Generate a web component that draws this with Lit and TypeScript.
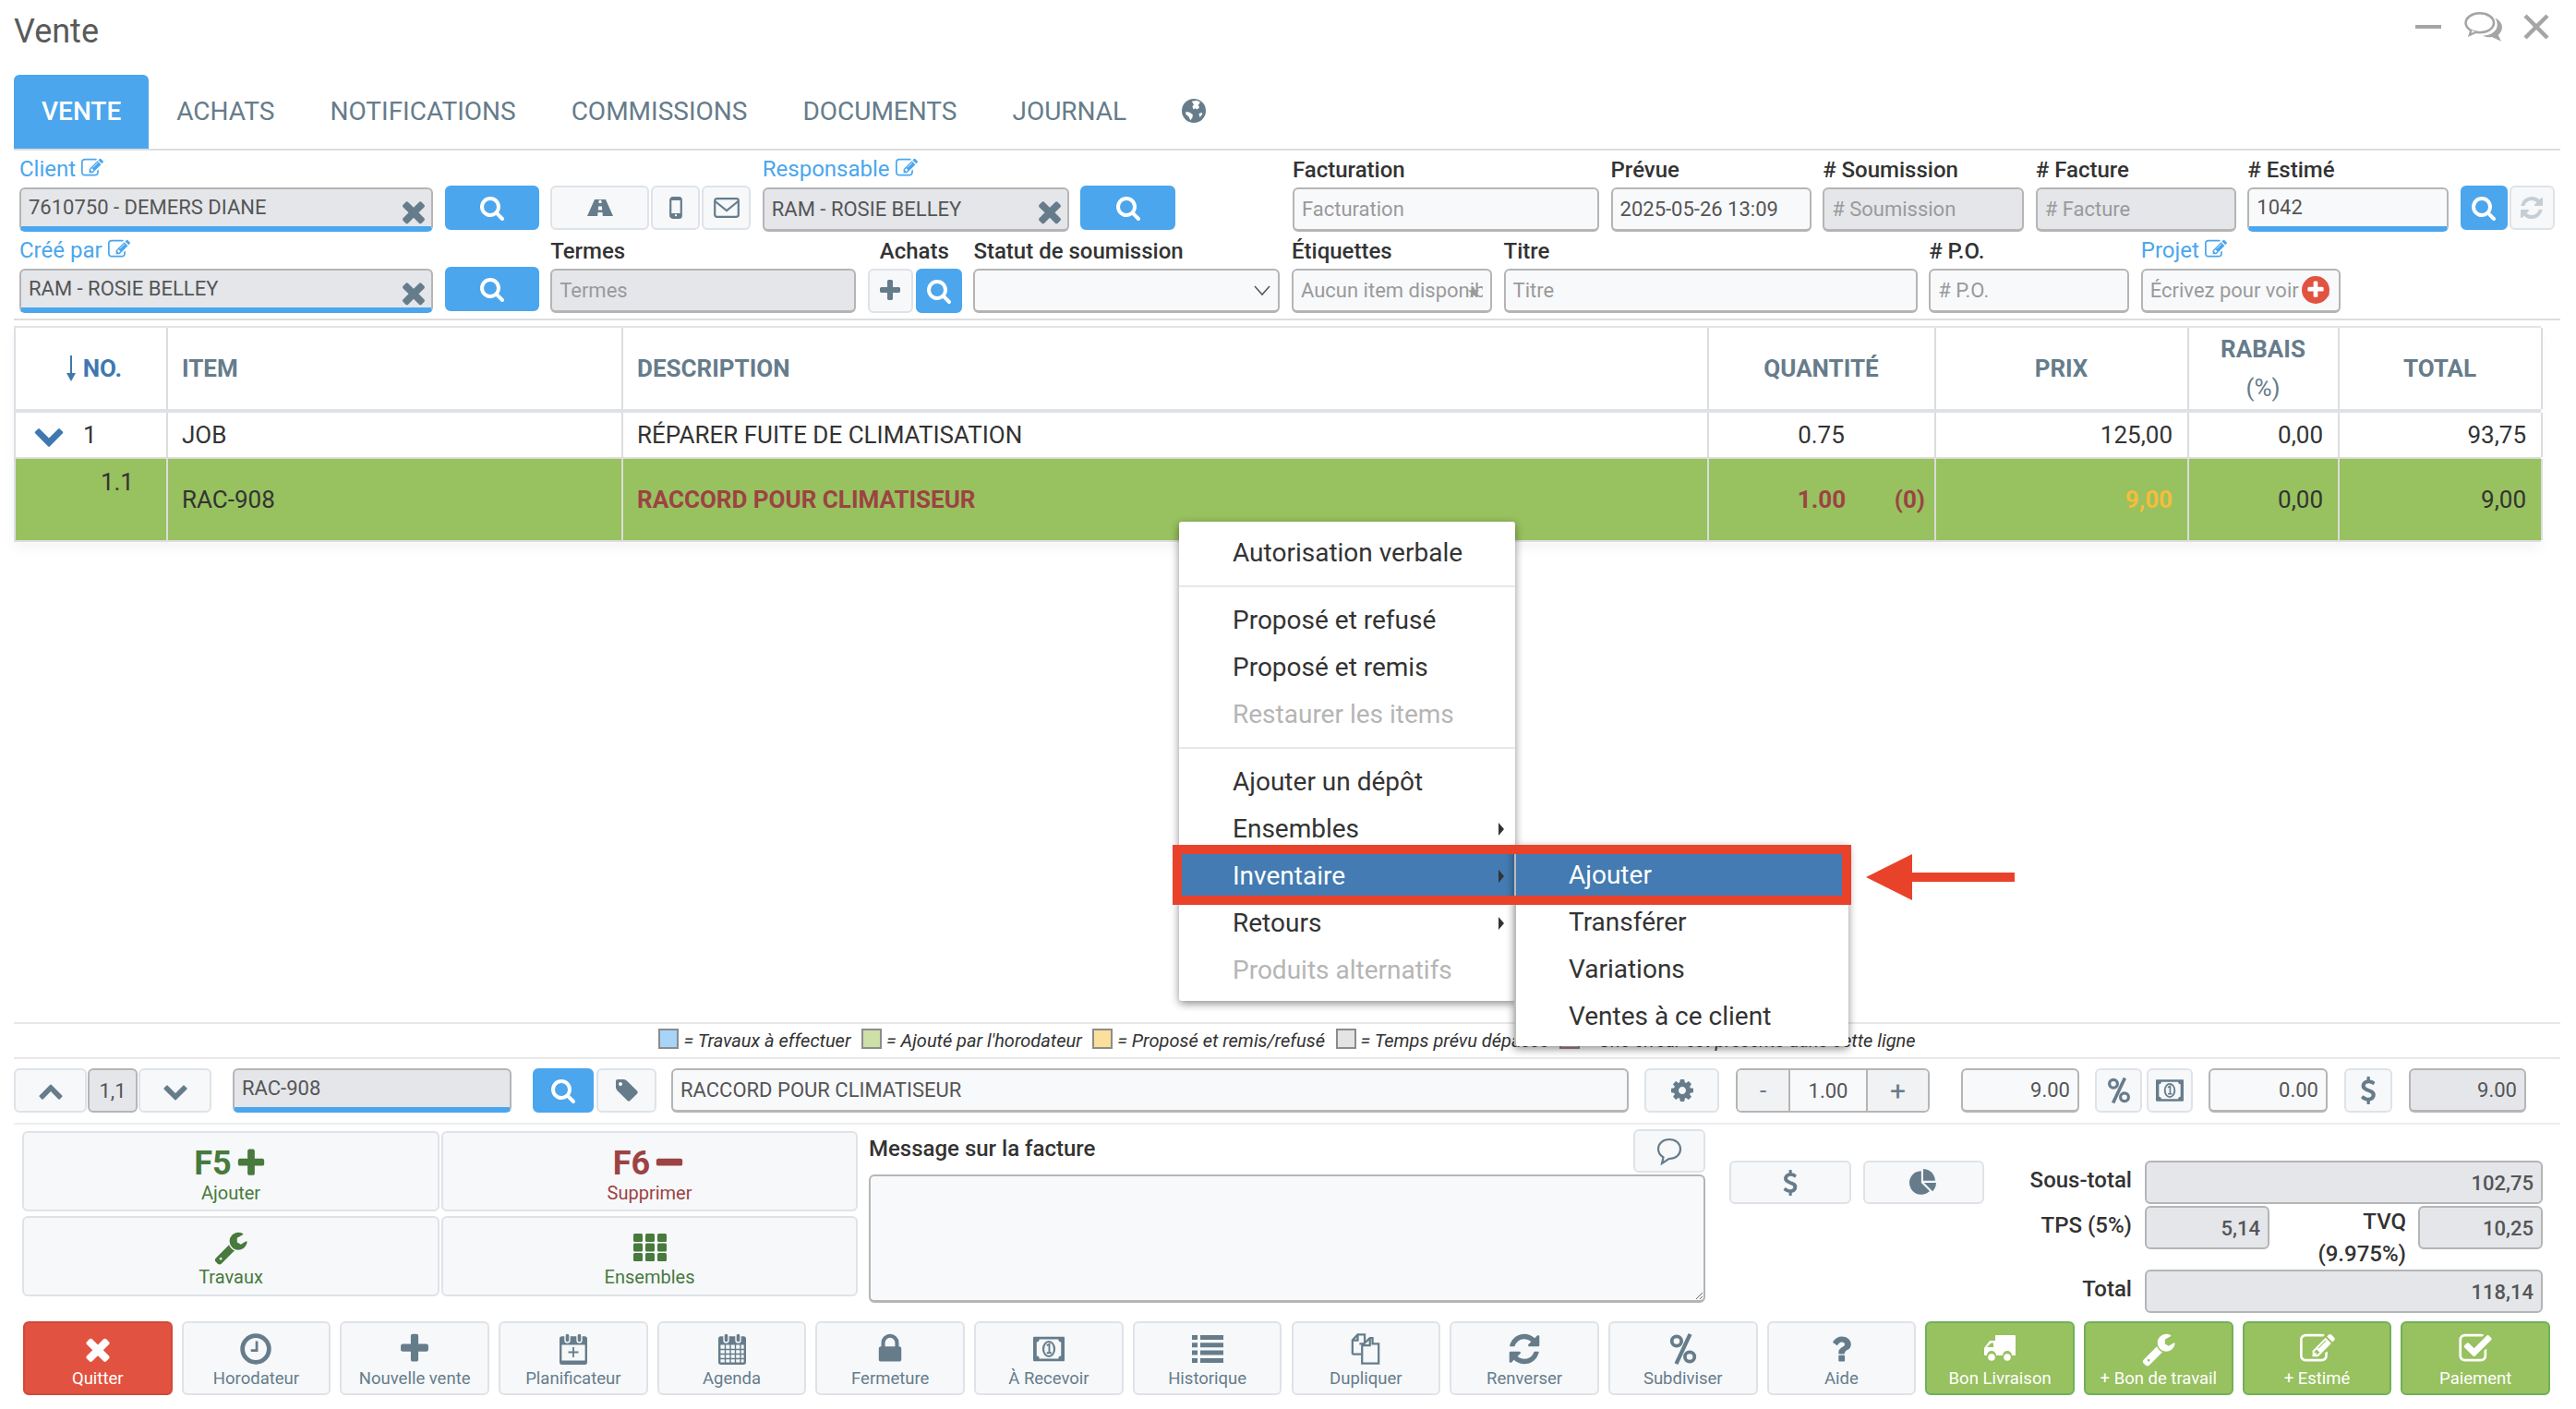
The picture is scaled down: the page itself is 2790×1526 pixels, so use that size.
import { LitElement, html, css, svg } from "lit";
import { customElement } from "lit/decorators.js";

const P = {
  search: "M1216 832q0-185-131.5-316.5t-316.5-131.5-316.5 131.5-131.5 316.5 131.5 316.5 316.5 131.5 316.5-131.5 131.5-316.5zm512 832q0 52-38 90t-90 38q-54 0-90-38l-343-342q-179 124-399 124-143 0-273.5-55.5t-225-150-150-225-55.5-273.5 55.5-273.5 150-225 225-150 273.5-55.5 273.5 55.5 225 150 150 225 55.5 273.5q0 220-124 399l343 343q37 37 37 90z",
  times: "M1490 1322q0 40-28 68l-136 136q-28 28-68 28t-68-28l-294-294-294 294q-28 28-68 28t-68-28l-136-136q-28-28-28-68t28-68l294-294-294-294q-28-28-28-68t28-68l136-136q28-28 68-28t68 28l294 294 294-294q28-28 68-28t68 28l136 136q28 28 28 68t-28 68l-294 294 294 294q28 28 28 68z",
  plus: "M1600 736v192q0 40-28 68t-68 28h-416v416q0 40-28 68t-68 28h-192q-40 0-68-28t-28-68v-416h-416q-40 0-68-28t-28-68v-192q0-40 28-68t68-28h416v-416q0-40 28-68t68-28h192q40 0 68 28t28 68v416h416q40 0 68 28t28 68z",
  minus: "M1600 736v192q0 40-28 68t-68 28h-1216q-40 0-68-28t-28-68v-192q0-40 28-68t68-28h1216q40 0 68 28t28 68z",
  down: "M1683 808l-742 741q-19 19-45 19t-45-19l-742-741q-19-19-19-45.5t19-45.5l166-165q19-19 45-19t45 19l531 531 531-531q19-19 45-19t45 19l166 165q19 19 19 45.5t-19 45.5z",
  up: "M1683 1331l-166 165q-19 19-45 19t-45-19l-531-531-531 531q-19 19-45 19t-45-19l-166-165q-19-19-19-45.5t19-45.5l742-741q19-19 45-19t45 19l742 741q19 19 19 45.5t-19 45.5z",
  refresh: "M1639 1056q0 5-1 7-64 268-268 434.5t-478 166.5q-146 0-282.5-55t-243.5-157l-129 129q-19 19-45 19t-45-19-19-45v-448q0-26 19-45t45-19h448q26 0 45 19t19 45-19 45l-137 137q71 66 161 102t187 36q134 0 250-65t186-179q11-17 53-117 8-23 30-23h192q13 0 22.5 9.5t9.5 22.5zm25-800v448q0 26-19 45t-45 19h-448q-26 0-45-19t-19-45 19-45l138-138q-148-137-349-137-134 0-250 65t-186 179q-11 17-53 117-8 23-30 23h-199q-13 0-22.5-9.5t-9.5-22.5v-7q65-268 270-434.5t480-166.5q146 0 284 55.5t245 156.5l130-129q19-19 45-19t45 19 19 45z",
  wrench: "M448 1472q0-26-19-45t-45-19-45 19-19 45 19 45 45 19 45-19 19-45zm644-420l-682 682q-37 37-90 37-52 0-91-37l-106-108q-38-36-38-90 0-53 38-91l681-681q39 98 114.5 173.5t173.5 114.5zm634-435q0 39-23 106-47 134-164.5 217.5t-258.5 83.5q-185 0-316.5-131.5t-131.5-316.5 131.5-316.5 316.5-131.5q58 0 121.5 16.5t107.5 46.5q16 11 16 28t-16 28l-293 169v224l193 107q5-3 79-48.5t135.5-81 70.5-35.5q15 0 23.5 10t8.5 25z",
  edit: "M888 1184l116-116-152-152-116 116v56h96v96h56zm440-720q-16-16-33 1l-350 350q-17 17-1 33t33-1l350-350q17-17 1-33zm80 594v190q0 119-84.5 203.5t-203.5 84.5h-832q-119 0-203.5-84.5t-84.5-203.5v-832q0-119 84.5-203.5t203.5-84.5h832q63 0 117 25 15 7 18 23 3 17-9 29l-49 49q-14 14-32 8-23-6-45-6h-832q-66 0-113 47t-47 113v832q0 66 47 113t113 47h832q66 0 113-47t47-113v-126q0-13 9-22l64-64q15-15 35-7t20 29zm-96-738l288 288-672 672h-288v-288zm444 132l-92 92-288-288 92-92q28-28 68-28t68 28l152 152q28 28 28 68t-28 68z",
  check: "M1472 930v318q0 119-84.5 203.5t-203.5 84.5h-832q-119 0-203.5-84.5t-84.5-203.5v-832q0-119 84.5-203.5t203.5-84.5h832q63 0 117 25 15 7 18 23 3 17-9 29l-49 49q-10 10-23 10-3 0-9-2-23-6-45-6h-832q-66 0-113 47t-47 113v832q0 66 47 113t113 47h832q66 0 113-47t47-113v-254q0-13 9-22l64-64q10-10 23-10 6 0 12 3 20 8 20 29zm231-489l-814 814q-24 24-57 24t-57-24l-430-430q-24-24-24-57t24-57l110-110q24-24 57-24t57 24l263 263 647-647q24-24 57-24t57 24l110 110q24 24 24 57t-24 57z",
  question: "M1088 1256v240q0 16-12 28t-28 12h-240q-16 0-28-12t-12-28v-240q0-16 12-28t28-12h240q16 0 28 12t12 28zm316-600q0 54-15.5 101t-35 76.5-55 59.5-57.5 43.5-61 35.5q-41 23-68.5 65t-27.5 67q0 17-12 32.5t-28 15.5h-240q-15 0-25.5-18.5t-10.5-37.5v-45q0-83 65-156.5t143-108.5q59-27 84-56t25-76q0-42-46.5-74t-107.5-32q-65 0-108 29-35 25-107 115-13 16-31 16-12 0-25-8l-164-125q-13-10-15.5-25t5.5-28q160-266 464-266 80 0 161 31t146 83 106 127.5 41 158.5z",
  dollar: "M1362 1185q0 153-99.5 263.5t-258.5 136.5v175q0 14-9 23t-23 9h-135q-13 0-22.5-9.5t-9.5-22.5v-175q-66-9-127.5-31t-101.5-44.5-74-48-46.5-37.5-17.5-18q-17-21-2-41l103-135q7-10 23-12 15-2 24 9l2 2q113 99 243 125 37 8 74 8 81 0 142.5-43t61.5-122q0-28-15-53t-33.5-42-58.5-37.5-66-32-80-32.5q-39-16-61.5-25t-61.5-26.5-62.5-31-56.5-35.5-53.5-42.5-43.5-49-35.5-58-21-66.5-8.5-78q0-138 98-242t255-134v-180q0-13 9.5-22.5t22.5-9.5h135q14 0 23 9t9 23v176q57 6 110.5 23t87 33.5 63.5 37.5 39 29 15 14q17 18 5 38l-81 146q-8 15-23 16-14 3-27-7-3-3-14.5-12t-39-26.5-58.5-32-74.5-26-85.5-11.5q-95 0-155 43t-60 111q0 26 8.5 48t29.5 41.5 39.5 33 56 31 60.5 27 70 27.5q53 20 81 31.5t76 35 75.5 42.5 62 50 53 63.5 31.5 76.5 13 94z",
  lock: "M640 768h512v-192q0-106-75-181t-181-75-181 75-75 181v192zm832 96v576q0 40-28 68t-68 28h-960q-40 0-68-28t-28-68v-576q0-40 28-68t68-28h32v-192q0-184 132-316t316-132 316 132 132 316v192h32q40 0 68 28t28 68z",
  tag: "M576 448q0-53-37.5-90.5t-90.5-37.5-90.5 37.5-37.5 90.5 37.5 90.5 90.5 37.5 90.5-37.5 37.5-90.5zm1067 576q0 53-37 90l-491 492q-39 37-91 37-53 0-90-37l-715-716q-38-37-64.5-101t-26.5-117v-416q0-52 38-90t90-38h416q53 0 117 26.5t102 64.5l715 714q37 39 37 91z",
  cog: "M1152 896q0-106-75-181t-181-75-181 75-75 181 75 181 181 75 181-75 75-181zm512-109v222q0 12-8 23t-20 13l-185 28q-19 54-39 91 35 50 107 138 10 12 10 25t-9 23q-27 37-99 108t-94 71q-12 0-26-9l-138-108q-44 23-91 38-16 136-29 186-7 28-36 28h-222q-14 0-24.5-8.5t-11.5-21.5l-28-184q-49-16-90-37l-141 107q-10 9-25 9-14 0-25-11-126-114-165-168-7-10-7-23 0-12 8-23 15-21 51-66.5t54-70.5q-27-50-41-99l-183-27q-13-2-21-12.5t-8-23.5v-222q0-12 8-23t19-13l186-28q14-46 39-92-40-57-107-138-10-12-10-24 0-10 9-23 26-36 98.5-107.5t94.5-71.5q13 0 26 10l138 107q44-23 91-38 16-136 29-186 7-28 36-28h222q14 0 24.5 8.5t11.5 21.5l28 184q49 16 90 37l142-107q9-9 24-9 13 0 25 10 129 119 165 170 7 8 7 22 0 12-8 23-15 21-51 66.5t-54 70.5q26 50 41 98l183 28q13 2 21 12.5t8 23.5z",
  pie: "M768 890l546 546q-106 108-247.5 168t-298.5 60q-209 0-385.5-103t-279.5-279.5-103-385.5 103-385.5 279.5-279.5 385.5-103v762zm187 6h773q0 157-60 298.5t-168 247.5zm709-128h-768v-768q209 0 385.5 103t279.5 279.5 103 385.5z",
};

const fa = (d: string, cls = "") =>
  html`<svg class="ic ${cls}" viewBox="0 0 1792 1792" aria-hidden="true"><path d=${d} fill="currentColor"></path></svg>`;

const raw = (vb: string, body: unknown, cls = "") =>
  html`<svg class="ic ${cls}" viewBox=${vb} aria-hidden="true">${body}</svg>`;

const ICON = {
  road: raw("0 0 28 18", svg`<path fill="currentColor" fill-rule="evenodd" d="M8 0H20L28 18H0ZM12.7 0.8L12.4 4H15.6L15.3 0.8ZM12.1 7.5L11.8 11.5H16.2L15.9 7.5ZM11.5 14L11.2 18H16.8L16.5 14Z"/>`),
  mobile: raw("0 0 14 24", svg`<rect x="1.2" y="1.2" width="11.6" height="21.6" rx="2.4" fill="none" stroke="currentColor" stroke-width="2.2"/><rect x="1" y="18" width="12" height="4.5" fill="currentColor"/><circle cx="7" cy="20.2" r="1.1" fill="#fff"/><rect x="1" y="1.5" width="12" height="2.5" fill="currentColor"/>`),
  mail: raw("0 0 28 22", svg`<rect x="1.2" y="1.2" width="25.6" height="19.6" rx="2.2" fill="none" stroke="currentColor" stroke-width="2.2"/><path d="M1.5 4 L14 14 L26.5 4" fill="none" stroke="currentColor" stroke-width="2.2"/>`),
  globe: raw("0 0 24 24", svg`<circle cx="12" cy="12" r="12" fill="currentColor"/><path fill="#fff" d="M10 2.500l5-1 3.500 2-2 2.500 1 3-2.500 1.500-1.500-1-2 1-1-3 1.500-1.500zM4 13l4 .5 3 2.500-.5 3-2 2.500-1.500-3.500-3-2.500zM17 15l3-1.500.5 2-2.500 3z"/>`),
  clock: raw("0 0 32 32", svg`<circle cx="16" cy="16" r="13.500" fill="none" stroke="currentColor" stroke-width="4.500"/><path d="M17 8v9.500h-6" fill="none" stroke="currentColor" stroke-width="2.600"/>`),
  calplus: raw("0 0 30 34", svg`<rect x="1.200" y="4.500" width="27.600" height="28.300" rx="1.500" fill="none" stroke="currentColor" stroke-width="2.400"/><path d="M1 5h28v7.500H1zM1 29.500h28v4H1z" fill="currentColor"/><rect x="6" y="0" width="5" height="10" rx="2.500" fill="currentColor" stroke="#f6f8fa" stroke-width="1.400"/><rect x="19" y="0" width="5" height="10" rx="2.500" fill="currentColor" stroke="#f6f8fa" stroke-width="1.400"/><path d="M15 15v11M9.500 20.500h11" stroke="currentColor" stroke-width="1.800"/>`),
  cal: raw("0 0 30 34", svg`<rect x="1.200" y="4.500" width="27.600" height="28.300" rx="1.500" fill="none" stroke="currentColor" stroke-width="2.400"/><path d="M1 5h28v7.500H1z" fill="currentColor"/><rect x="6" y="0" width="5" height="10" rx="2.500" fill="currentColor" stroke="#f6f8fa" stroke-width="1.400"/><rect x="19" y="0" width="5" height="10" rx="2.500" fill="currentColor" stroke="#f6f8fa" stroke-width="1.400"/><path d="M7.500 12v20M13 12v20M18.500 12v20M24 12v20M1 17.500h28M1 22.500h28M1 27.500h28" stroke="currentColor" stroke-width="1.400"/>`),
  money: raw("0 0 36 28", svg`<rect width="36" height="28" rx="1" fill="currentColor"/><path d="M4 6c2 0 3-1 3-3h22c0 2 1 3 3 3v16c-2 0-3 1-3 3H7c0-2-1-3-3-3z" fill="#f6f8fa"/><ellipse cx="18" cy="14" rx="7.500" ry="9.500" fill="currentColor"/><ellipse cx="18" cy="14" rx="5.200" ry="7.500" fill="#f6f8fa"/><path d="M15.500 10l3-1.500v10M15.500 18.500h5.500" stroke="currentColor" stroke-width="2" fill="none"/>`),
  list: raw("0 0 34 30", svg`<path fill="currentColor" d="M0 0h6v5H0zM9 0h25v5H9zM0 8.300h6v5H0zM9 8.300h25v5H9zM0 16.600h6v5H0zM9 16.600h25v5H9zM0 25h6v5H0zM9 25h25v5H9z"/>`),
  files: raw("0 0 34 36", svg`<path d="M2 24V8L8 1.500h8V12h-6M8 1.500V8H2M2 24h10" fill="none" stroke="currentColor" stroke-width="2.400"/><path d="M13 14L22 5.500h3V12h7v22.500H13z M22 5.500V14H13" fill="#f6f8fa" stroke="currentColor" stroke-width="2.400"/>`),
  percent: raw("0 0 30 36", svg`<circle cx="7.500" cy="9" r="5.500" fill="none" stroke="currentColor" stroke-width="4"/><circle cx="22.500" cy="27" r="5.500" fill="none" stroke="currentColor" stroke-width="4"/><path d="M23 1L7 35" stroke="currentColor" stroke-width="4.500"/>`),
  th: raw("0 0 36 30", svg`<g fill="currentColor">${[0, 13, 26].flatMap((x) => [0, 10.5, 21].map((y) => svg`<rect x=${x} y=${y} width="10" height="9" rx="1.500"/>`))}</g>`),
  comment: raw("0 0 28 30", svg`<path d="M14 2C7 2 2 6.500 2 12.500c0 4 2.500 7 5.500 9L6 28l7.500-5H14c7 0 12-4.500 12-10.500S21 2 14 2z" fill="none" stroke="currentColor" stroke-width="2.200"/>`),
  truck: raw("0 0 34 30", svg`<path fill="currentColor" d="M12 0H33a1 1 0 0 1 1 1V22H30a5 5 0 0 0-10 0H13a5 5 0 0 0-10 0H1a1 1 0 0 1-1-1V14L6 6H12z"/><path fill="#98c15f" d="M3 13L7.500 8.500H10V13z"/><circle cx="8" cy="24" r="3.800" fill="currentColor"/><circle cx="25" cy="24" r="3.800" fill="currentColor"/>`),
  star: raw("0 0 16 16", svg`<path fill="currentColor" d="M8 1l2 5h5l-4 3.500 1.500 5.500L8 12l-4.500 3L5 9.500 1 6h5z"/>`),
  vee: raw("0 0 18 12", svg`<path d="M1 1l8 9 8-9" fill="none" stroke="currentColor" stroke-width="1.500"/>`),
  arrowDown: raw("0 0 12 28", svg`<path d="M6 0v22" stroke="currentColor" stroke-width="2"/><path d="M1 19h10L6 28z" fill="currentColor"/>`),
};

const actions: [string, unknown, string][] = [
  ["Quitter", fa(P.times, "gi"), "danger"],
  ["Horodateur", ICON.clock, ""],
  ["Nouvelle vente", fa(P.plus, "gi"), ""],
  ["Planificateur", ICON.calplus, ""],
  ["Agenda", ICON.cal, ""],
  ["Fermeture", fa(P.lock, "gi"), ""],
  ["À Recevoir", ICON.money, ""],
  ["Historique", ICON.list, ""],
  ["Dupliquer", ICON.files, ""],
  ["Renverser", fa(P.refresh, "gi"), ""],
  ["Subdiviser", ICON.percent, ""],
  ["Aide", fa(P.question, "gi"), ""],
  ["Bon Livraison", ICON.truck, "ok"],
  ["+ Bon de travail", fa(P.wrench, "gi"), "ok"],
  ["+ Estimé", fa(P.edit, "gi"), "ok"],
  ["Paiement", fa(P.check, "gi"), "ok"],
];

const legend: [string, string][] = [
  ["sw-blue", "= Travaux à effectuer"],
  ["sw-green", "= Ajouté par l'horodateur"],
  ["sw-yellow", "= Proposé et remis/refusé"],
  ["sw-grey", "= Temps prévu dépassé"],
  ["sw-red", "= Une erreur est présente dans cette ligne"],
];

@customElement("app-root")
export class AppRoot extends LitElement {
  static styles = css`
    :host { display: block; position: relative; width: 2790px; height: 1526px; overflow: hidden; background: #fff;
      font-family: Roboto, "Liberation Sans", sans-serif; color: #333; font-size: 24px; }
    * { box-sizing: border-box; }
    .page { display: flex; flex-direction: column; height: 100%; padding: 0 17px 15px 15px; }
    .ic { display: block; flex: none; width: 1em; height: 1em; }

    .top { height: 81px; flex: none; display: flex; justify-content: space-between; align-items: flex-start; }
    .title { font-size: 36px; line-height: 68px; color: #5a5a5a; }
    .win { display: flex; align-items: center; color: #a5a5a5; margin: 12px 12px 0 0; }
    .win .min { width: 28px; height: 4px; background: #a5a5a5; }
    .win .chat { width: 42px; height: 34px; margin-left: 25px; }
    .win .x { width: 28px; height: 28px; margin-left: 22px; }

    .tabs { height: 82px; flex: none; display: flex; align-items: stretch; border-bottom: 2px solid #ddd; font-size: 28px; color: #667c8b; }
    .tab { display: flex; align-items: center; padding: 0 30px 2px; }
    .tab.on { background: #4ba6ee; color: #fff; font-weight: 500; border-radius: 6px 6px 0 0; }
    .tab .ic { font-size: 26px; }

    .form { flex: none; padding: 0 0 6px 6px; border-bottom: 2px solid #ddd; }
    .fr { display: grid; column-gap: 12.600px; height: 88px; }
    .fr1 { grid-template-columns: 448px 102px 217px 332px 103px 101.400px 332px 217px 218px 217px 218px 102px; }
    .fr2 { grid-template-columns: 448px 102px 331px 102px 332px 217px 448px 217px 216px; }
    .f { display: flex; flex-direction: column; min-width: 0; }
    .lb { height: 40px; font-size: 24px; line-height: 42px; font-weight: 500; color: #333; white-space: nowrap; }
    .lb.link { color: #4ba6ee; font-weight: 400; display: flex; align-items: center; gap: 6px; }
    .lb.link .ic { font-size: 24px; margin-top: -3px; }
    .lb.ind { padding-left: 13px; }
    .ctl { position: relative; height: 48px; }
    .inp { width: 100%; height: 100%; display: block; font: inherit; font-size: 22px; color: #555; padding: 0 8px; background: #f8f9fb;
      border: 2px solid #b5b5b5; border-bottom-width: 3px; border-radius: 6px; outline: none; }
    .inp::placeholder { color: #9a9a9a; opacity: 1; }
    .inp.dis { background: #e4e6ea; }
    .inp.focus { border-bottom: 6px solid #4ba6ee; padding-bottom: 1px; }
    .inp.right { text-align: right; }
    .clear { position: absolute; right: 3px; top: 8px; font-size: 36px; color: #667c8b; }
    .star { position: absolute; left: 190px; top: 18px; font-size: 14px; color: #9a9a9a; }
    .redp { position: absolute; left: 174px; top: 8px; width: 30px; height: 30px; border-radius: 50%; background: #e25241; color: #fff; display: flex; align-items: center; justify-content: center; font-size: 22px; }
    .sel { position: relative; height: 100%; }
    .sel .vee { position: absolute; right: 10px; top: 18px; color: #555; }
    .sel .vee .ic { width: 18px; height: 12px; }

    .btn { display: flex; align-items: center; justify-content: center; background: #f6f8fa; border: 2px solid #dfe3e8; border-radius: 6px; color: #667c8b; padding: 0; min-width: 0; font: inherit; }
    .btn.p { background: #4ba6ee; border-color: #4ba6ee; color: #fff; }
    .btnrow { display: flex; gap: 2px; height: 48px; }
    .btnrow.ach { gap: 3px; }
    .up2 { margin-top: -2px; }
    .h48 { height: 48px; font-size: 28px; }
    .road { width: 107px; } .road .ic { width: 28px; height: 18px; }
    .phone { width: 53px; } .phone .ic { width: 14px; height: 24px; }
    .mail { width: 53px; } .mail .ic { width: 28px; height: 22px; }
    .w50 { width: 50px; } .w51 { width: 51px; } .w49 { width: 49px; }
    .faint { color: #c5ced5; }

    .tablewrap { flex: 1; padding-top: 6px; min-height: 0; }
    .tbl { width: 2737px; border-top: 2px solid #e1e5e9; box-shadow: 0 8px 12px rgba(0,0,0,.04); }
    .tr { display: grid; grid-template-columns: 165px 493px 1176px 246px 274px 163px 220px; border-left: 2px solid #dcdfe3; }
    .tr > div { border-right: 2px solid #dcdcdc; padding: 0 16px 0 15px; display: flex; align-items: center; min-width: 0; white-space: nowrap; }
    .th { height: 92px; border-bottom: 4px solid #dee2e6; color: #667c8b; font-weight: 700; font-size: 26px; }
    .th > div { line-height: 42px; }
    .th .c { justify-content: center; }
    .th .no { justify-content: flex-end; color: #3f78b0; padding-right: 48px; gap: 7px; }
    .th .no .ic { width: 12px; height: 28px; }
    .th .stack { flex-direction: column; justify-content: center; }
    .th .stack span:last-child { font-weight: 400; }
    .r1 { height: 50px; border-bottom: 2px solid #ddd; font-size: 26px; }
    .r2 { height: 90px; border-bottom: 2px solid #ddd; background: #98c15f; font-size: 26px; }
    .tr .rt { justify-content: flex-end; }
    .tr .cn { justify-content: center; }
    .tr .no1 { padding-left: 19px; gap: 20px; color: #333; }
    .no1 .ic { width: 34px; height: 34px; color: #3f78b0; }
    .tr .no2 { justify-content: flex-end; align-items: flex-start; padding: 10px 35px 0 0; }
    .red { color: #9c4343; font-weight: 700; }
    .gold { color: #f4bd3b; font-weight: 700; }
    .tr .qty2 { display: grid; grid-template-columns: 1fr auto 1fr; padding: 0 10px; align-items: center; }
    .qty2 span:last-child { justify-self: end; }

    .legend { flex: none; height: 40px; border-top: 2px solid #e8e8e8; border-bottom: 2px solid #e8e8e8; display: flex; align-items: center; justify-content: center; gap: 11.500px; font-size: 20px; font-style: italic; color: #333; }
    .lg { display: flex; align-items: center; gap: 5px; white-space: nowrap; }
    .sw { width: 22px; height: 22px; border: 2px solid #8c8c8c; margin-top: -4px; }
    .sw-blue { background: #a8d4f8; } .sw-green { background: #cde0a8; } .sw-yellow { background: #fbdf9b; } .sw-grey { background: #e4e4e4; } .sw-red { background: #f4b0a8; }

    .bar { flex: none; display: flex; height: 71px; padding: 10px 0 11px; border-bottom: 2px solid #eee; color: #667c8b; }
    .bar > * { height: 48px; flex: none; }
    .bar .ic { font-size: 28px; }
    .b-up { width: 79px; } .b-num { width: 54px; margin-left: 1px; background: #e4e6ea; border-color: #b5b5b5; color: #555; font-size: 22px; }
    .b-dn { width: 79px; margin-left: 1px; }
    .b-code { width: 302px; margin-left: 23px; }
    .b-s { width: 66px; margin-left: 23px; } .b-tag { width: 65px; margin-left: 3px; }
    .b-desc { width: 1037px; margin-left: 16px; }
    .b-gear { width: 81px; margin-left: 17px; }
    .b-qty { width: 210px; margin-left: 18px; display: flex; border: 2px solid #b5b5b5; border-radius: 6px; overflow: hidden; font-size: 22px; background: #f8f9fb; color: #555; }
    .b-qty > div { display: flex; align-items: center; justify-content: center; }
    .b-qty .m { width: 57px; background: #f1f2f3; border-right: 2px solid #b5b5b5; color: #667c8b; font-size: 26px; }
    .b-qty .v { flex: 1; }
    .b-qty .pl { width: 67px; background: #f1f2f3; border-left: 2px solid #b5b5b5; color: #667c8b; font-size: 30px; }
    .b-price { width: 128px; margin-left: 34px; }
    .b-pct { width: 51px; margin-left: 17px; } .bar .b-pct .ic { width: 24px; height: 30px; }
    .b-mon { width: 50px; margin-left: 5px; } .bar .b-mon .ic { width: 30px; height: 24px; }
    .b-disc { width: 129px; margin-left: 17px; }
    .b-usd { width: 52px; margin-left: 18px; } .bar .b-usd .ic { font-size: 30px; }
    .b-tot { width: 127px; margin-left: 18px; }

    .lower { flex: none; height: 213px; display: grid; grid-template-columns: 905px 918px 302px 605px; padding-left: 9px; color: #333; }
    .bigs { display: grid; grid-template-columns: 452px 451px; grid-template-rows: 87px 87px; column-gap: 2px; row-gap: 5px; padding-top: 7px; align-content: start; }
    .big { flex-direction: column; color: #477a3c; font-size: 20px; }
    .big.del { color: #9c4343; }
    .big .key { display: flex; align-items: center; gap: 3px; font-size: 36px; line-height: 44px; font-weight: 700; height: 44px; margin-top: 5px; }
    .big .key .ic { font-size: 36px; }
    .big .gl { height: 44px; display: flex; align-items: center; margin-top: 4px; }
    .big .gl .ic { width: 38px; height: 38px; }
    .big .gl .gridi .ic { width: 36px; height: 30px; }
    .big .lbl { line-height: 26px; margin-top: -3px; }

    .msg { margin-left: 12px; }
    .msghead { height: 54px; padding-top: 5px; display: flex; justify-content: space-between; align-items: flex-start; }
    .msghead .btn { width: 78px; height: 47px; }
    .msghead .btn .ic { width: 28px; height: 30px; }
    textarea { display: block; width: 100%; height: 139px; background: #f8f9fb; border: 2px solid #b5b5b5; border-bottom-width: 3px; border-radius: 6px; outline: none; }

    .mid { display: flex; gap: 13px; padding-top: 39px; margin-left: 26px; align-items: flex-start; }
    .mid .btn { width: 131.500px; height: 47px; }
    .mid .btn .ic { font-size: 28px; }
    .mid .btn .pi { font-size: 30px; }

    .totals { padding-top: 39px; display: grid; grid-template-columns: 174px 135px 161px 135px; grid-template-rows: 47px 67px 47px; row-gap: 2px; font-weight: 500; }
    .tl { text-align: right; padding-right: 14px; line-height: 42px; white-space: nowrap; }
    .tvq { line-height: 35px; padding-right: 13px; }
    .tv { height: 47px; background: #e4e6ea; border: 2px solid #b5b5b5; border-radius: 6px; display: flex; align-items: center; justify-content: flex-end; padding: 2px 8px 0 0; font-size: 22px; color: #555; }
    .span3 { grid-column: 2 / 5; }

    .actions { flex: none; display: grid; grid-template-columns: repeat(16, 1fr); column-gap: 10.200px; margin-left: 10px; margin-right: 11px; height: 80px; }
    .act { flex-direction: column; font-size: 18.500px; color: #667c8b; height: 80px; justify-content: flex-start; padding-top: 10px; }
    .act .gl { height: 36px; display: flex; align-items: center; justify-content: center; }
    .act .gl .ic { width: 34px; height: 34px; }
    .act .gl .gi { width: 38px; height: 38px; }
    .act .t { line-height: 26px; margin-top: 1px; white-space: nowrap; }
    .btn.act.danger { background: #e25241; border-color: #cf4a3a; color: #fff; }
    .btn.act.ok { background: #98c15f; border-color: #70b05a; color: #fff; }

    .menu { position: absolute; background: #fff; box-shadow: 0 3px 10px rgba(0,0,0,.45); border-radius: 3px; font-size: 28px; color: #333; z-index: 3; }
    .m1 { left: 1277px; top: 565px; width: 364px; padding: 8px 0; }
    .m2 { left: 1640px; top: 915px; width: 362px; padding: 7px 0 7px; border-left: 2px solid #bbb; }
    .mi { height: 51px; display: flex; align-items: center; justify-content: space-between; padding: 0 12px 0 58px; white-space: nowrap; }
    .m2 .mi { padding-left: 57px; }
    .mi.off { color: #b5b5b5; }
    .mi.on { background: #437bb2; color: #fff; }
    .mi .car { width: 0; height: 0; border-left: 6px solid #333; border-top: 7px solid transparent; border-bottom: 7px solid transparent; }
    .md { height: 2px; background: #e8e8e8; margin: 10px 0; }
    .hl { position: absolute; left: 1270px; top: 915px; width: 735px; height: 65px; border: 10px solid #e8432a; z-index: 4; }
    .arrow { position: absolute; left: 2021px; top: 925px; width: 161px; height: 50px; z-index: 4; }
  `;

  private label(t: string) {
    return html`<div class="lb">${t}</div>`;
  }
  private linkLabel(t: string) {
    return html`<div class="lb link">${t}${fa(P.edit)}</div>`;
  }
  private field(lbl: unknown, ctl: unknown) {
    return html`<div class="f">${lbl}<div class="ctl">${ctl}</div></div>`;
  }
  private searchBtn() {
    return html`<div class="f"><div class="lb"></div><div class="btn p h48 up2">${fa(P.search)}</div></div>`;
  }

  render() {
    return html`
      <div class="page">
        <div class="top">
          <div class="title">Vente</div>
          <div class="win"><div class="min"></div>${raw("0 0 40 32", svg`<path fill="currentColor" d="M32 7c4.500 2.500 7 5.600 7 9.500 0 3.500-1.800 6-4 8l3 6.500-9.500-4.500c-3.500.5-7 0-9.500-1.500 8 .2 15-4.500 15-11 0-2.600-.8-5-2-6.500z"/><ellipse cx="16" cy="12" rx="14.500" ry="10" fill="#fff" stroke="currentColor" stroke-width="2.500"/><path d="M7 19.500l-1.500 5 7-3" fill="#fff" stroke="currentColor" stroke-width="2.200"/>`, "chat")}${raw("0 0 28 28", svg`<path d="M2 2L26 26M26 2L2 26" stroke="currentColor" stroke-width="4.500" fill="none"/>`, "x")}</div>
        </div>
        <div class="tabs">
          <div class="tab on">VENTE</div>
          <div class="tab">ACHATS</div>
          <div class="tab">NOTIFICATIONS</div>
          <div class="tab">COMMISSIONS</div>
          <div class="tab">DOCUMENTS</div>
          <div class="tab">JOURNAL</div>
          <div class="tab">${ICON.globe}</div>
        </div>

        <div class="form">
          <div class="fr fr1">
            ${this.field(this.linkLabel("Client"), html`<input class="inp dis focus" readonly value="7610750 - DEMERS DIANE" />${fa(P.times, "clear")}`)}
            ${this.searchBtn()}
            <div class="f"><div class="lb"></div><div class="btnrow up2"><div class="btn road">${ICON.road}</div><div class="btn phone">${ICON.mobile}</div><div class="btn mail">${ICON.mail}</div></div></div>
            ${this.field(this.linkLabel("Responsable"), html`<input class="inp dis" readonly value="RAM - ROSIE BELLEY" />${fa(P.times, "clear")}`)}
            ${this.searchBtn()}
            <div></div>
            ${this.field(this.label("Facturation"), html`<input class="inp" placeholder="Facturation" />`)}
            ${this.field(this.label("Prévue"), html`<input class="inp" readonly value="2025-05-26 13:09" />`)}
            ${this.field(this.label("# Soumission"), html`<input class="inp dis" placeholder="# Soumission" />`)}
            ${this.field(this.label("# Facture"), html`<input class="inp dis" placeholder="# Facture" />`)}
            ${this.field(this.label("# Estimé"), html`<input class="inp focus" readonly value="1042" />`)}
            <div class="f"><div class="lb"></div><div class="btnrow up2"><div class="btn p w51 h48">${fa(P.search)}</div><div class="btn w49 h48 faint">${fa(P.refresh)}</div></div></div>
          </div>
          <div class="fr fr2">
            ${this.field(this.linkLabel("Créé par"), html`<input class="inp dis focus" readonly value="RAM - ROSIE BELLEY" />${fa(P.times, "clear")}`)}
            ${this.searchBtn()}
            ${this.field(this.label("Termes"), html`<input class="inp dis" placeholder="Termes" />`)}
            <div class="f"><div class="lb ind">Achats</div><div class="btnrow ach"><div class="btn w49 h48">${fa(P.plus)}</div><div class="btn p h48 w50">${fa(P.search)}</div></div></div>
            ${this.field(this.label("Statut de soumission"), html`<div class="sel"><input class="inp" readonly /><span class="vee">${ICON.vee}</span></div>`)}
            ${this.field(this.label("Étiquettes"), html`<input class="inp" placeholder="Aucun item disponible" /><span class="star">${ICON.star}</span>`)}
            ${this.field(this.label("Titre"), html`<input class="inp" placeholder="Titre" />`)}
            ${this.field(this.label("# P.O."), html`<input class="inp" placeholder="# P.O." />`)}
            ${this.field(this.linkLabel("Projet"), html`<input class="inp" placeholder="Écrivez pour voir les projets" /><span class="redp">${fa(P.plus)}</span>`)}
          </div>
        </div>

        <div class="tablewrap">
          <div class="tbl">
            <div class="tr th">
              <div class="no">${ICON.arrowDown}<span>NO.</span></div>
              <div>ITEM</div>
              <div>DESCRIPTION</div>
              <div class="c">QUANTITÉ</div>
              <div class="c">PRIX</div>
              <div class="c stack"><span>RABAIS</span><span>(%)</span></div>
              <div class="c">TOTAL</div>
            </div>
            <div class="tr r1">
              <div class="no1">${fa(P.down)}<span>1</span></div>
              <div>JOB</div>
              <div>RÉPARER FUITE DE CLIMATISATION</div>
              <div class="cn">0.75</div>
              <div class="rt">125,00</div>
              <div class="rt">0,00</div>
              <div class="rt">93,75</div>
            </div>
            <div class="tr r2">
              <div class="no2">1.1</div>
              <div>RAC-908</div>
              <div class="red">RACCORD POUR CLIMATISEUR</div>
              <div class="qty2 red"><span></span><span>1.00</span><span>(0)</span></div>
              <div class="rt gold">9,00</div>
              <div class="rt">0,00</div>
              <div class="rt">9,00</div>
            </div>
          </div>
        </div>

        <div class="legend">
          ${legend.map(([c, t]) => html`<div class="lg"><span class="sw ${c}"></span><span>${t}</span></div>`)}
        </div>

        <div class="bar">
          <div class="btn b-up">${fa(P.up)}</div>
          <div class="btn b-num">1,1</div>
          <div class="btn b-dn">${fa(P.down)}</div>
          <input class="inp dis focus b-code" readonly value="RAC-908" />
          <div class="btn p b-s">${fa(P.search)}</div>
          <div class="btn b-tag">${fa(P.tag)}</div>
          <input class="inp b-desc" readonly value="RACCORD POUR CLIMATISEUR" />
          <div class="btn b-gear">${fa(P.cog)}</div>
          <div class="b-qty"><div class="m">-</div><div class="v">1.00</div><div class="pl">+</div></div>
          <input class="inp right b-price" readonly value="9.00" />
          <div class="btn b-pct">${ICON.percent}</div>
          <div class="btn b-mon">${ICON.money}</div>
          <input class="inp right b-disc" readonly value="0.00" />
          <div class="btn b-usd">${fa(P.dollar)}</div>
          <input class="inp dis right b-tot" readonly value="9.00" />
        </div>

        <div class="lower">
          <div class="bigs">
            <div class="btn big"><div class="key">F5${fa(P.plus)}</div><div class="lbl">Ajouter</div></div>
            <div class="btn big del"><div class="key">F6${fa(P.minus)}</div><div class="lbl">Supprimer</div></div>
            <div class="btn big"><div class="gl">${fa(P.wrench)}</div><div class="lbl">Travaux</div></div>
            <div class="btn big"><div class="gl"><span class="gridi">${ICON.th}</span></div><div class="lbl">Ensembles</div></div>
          </div>
          <div class="msg">
            <div class="msghead">${this.label("Message sur la facture")}<div class="btn">${ICON.comment}</div></div>
            <textarea></textarea>
          </div>
          <div class="mid">
            <div class="btn">${fa(P.dollar)}</div>
            <div class="btn">${fa(P.pie, "pi")}</div>
          </div>
          <div class="totals">
            <div class="tl">Sous-total</div><div class="tv span3">102,75</div>
            <div class="tl">TPS (5%)</div><div class="tv">5,14</div><div class="tl tvq">TVQ<br />(9.975%)</div><div class="tv">10,25</div>
            <div class="tl">Total</div><div class="tv span3">118,14</div>
          </div>
        </div>

        <div class="actions">
          ${actions.map(([t, ic, c]) => html`<div class="btn act ${c}"><div class="gl">${ic}</div><div class="t">${t}</div></div>`)}
        </div>
      </div>

      <div class="menu m1">
        <div class="mi">Autorisation verbale</div>
        <div class="md"></div>
        <div class="mi">Proposé et refusé</div>
        <div class="mi">Proposé et remis</div>
        <div class="mi off">Restaurer les items</div>
        <div class="md"></div>
        <div class="mi">Ajouter un dépôt</div>
        <div class="mi">Ensembles<span class="car"></span></div>
        <div class="mi on">Inventaire<span class="car"></span></div>
        <div class="mi">Retours<span class="car"></span></div>
        <div class="mi off">Produits alternatifs</div>
      </div>
      <div class="menu m2">
        <div class="mi on">Ajouter</div>
        <div class="mi">Transférer</div>
        <div class="mi">Variations</div>
        <div class="mi">Ventes à ce client</div>
      </div>
      <div class="hl"></div>
      <svg class="arrow" viewBox="0 0 161 50" aria-hidden="true"><path d="M0 25L50 0V20H161V30H50V50Z" fill="#e8432a"></path></svg>
    `;
  }
}
